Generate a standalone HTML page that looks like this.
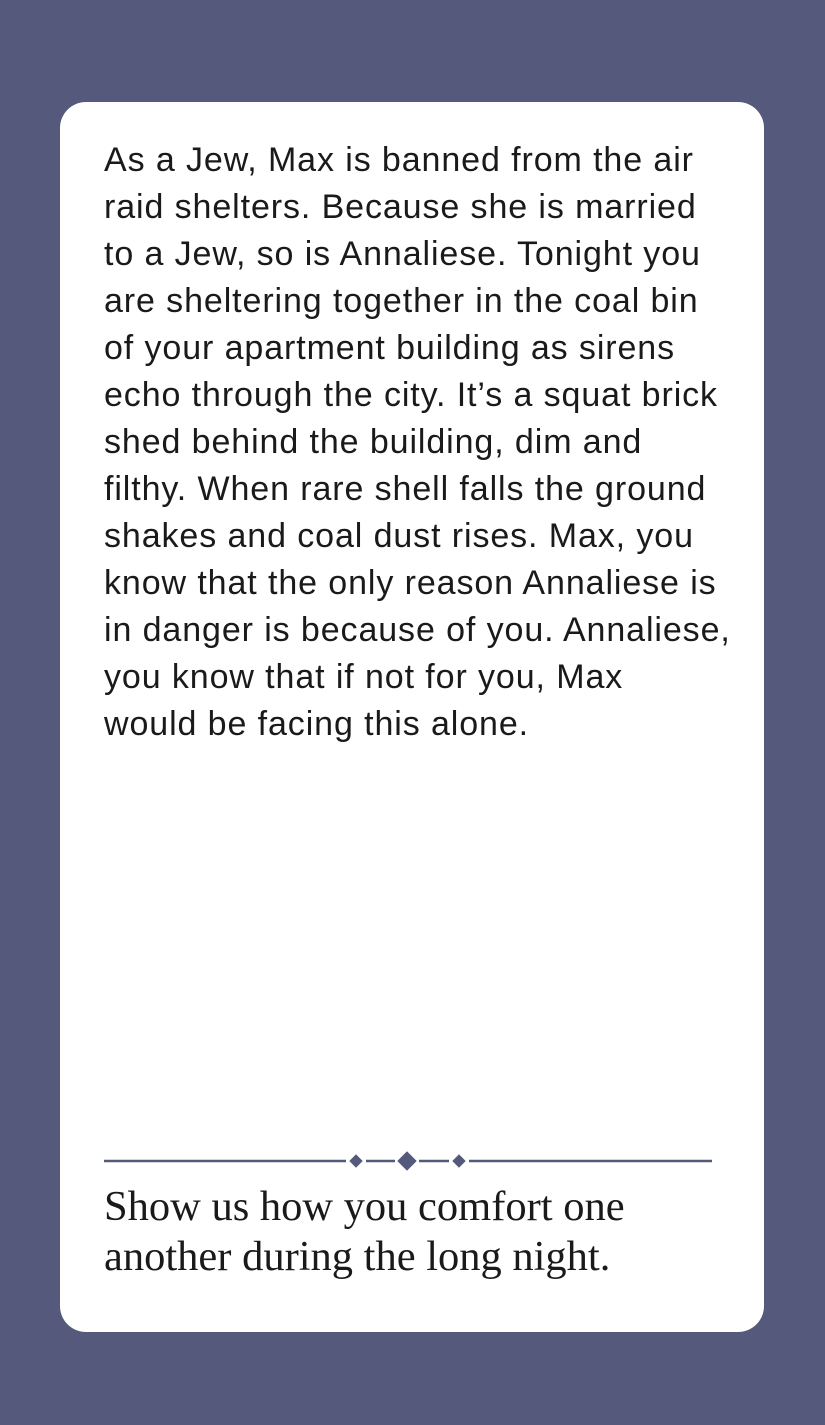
<!DOCTYPE html>
<html><head><style>
body{margin:0;width:825px;height:1425px;background:#555a7d;position:relative;overflow:hidden}
.card{position:absolute;left:60px;top:102px;width:704px;height:1230px;background:#fff;border-radius:26px}
.t{position:absolute;left:104px;top:137px;font-family:"Liberation Sans",sans-serif;font-size:34px;letter-spacing:0.9px;line-height:47px;color:#1a1a1a;white-space:nowrap}
.s{position:absolute;left:104px;top:1182px;font-family:"Liberation Serif",serif;font-size:42.5px;line-height:50px;color:#1a1a1a;white-space:nowrap}
</style></head><body>
<div class="card"></div>
<div class="t">As a Jew, Max is banned from the air<br>raid shelters. Because she is married<br>to a Jew, so is Annaliese. Tonight you<br>are sheltering together in the coal bin<br>of your apartment building as sirens<br>echo through the city. It’s a squat brick<br>shed behind the building, dim and<br>filthy. When rare shell falls the ground<br>shakes and coal dust rises. Max, you<br>know that the only reason Annaliese is<br>in danger is because of you. Annaliese,<br>you know that if not for you, Max<br>would be facing this alone.</div>
<svg style="position:absolute;left:0;top:0" width="825" height="1425">
<g fill="#555a7d" stroke="#555a7d" stroke-width="2.5">
<line x1="104" y1="1161" x2="346" y2="1161"/>
<line x1="366" y1="1161" x2="395" y2="1161"/>
<line x1="419" y1="1161" x2="449" y2="1161"/>
<line x1="469" y1="1161" x2="712" y2="1161"/>
<path d="M356 1155 L362 1161 L356 1167 L350 1161Z" stroke-width="1"/>
<path d="M407 1152 L416 1161 L407 1170 L398 1161Z" stroke-width="1"/>
<path d="M459 1155 L465 1161 L459 1167 L453 1161Z" stroke-width="1"/>
</g></svg>
<div class="s">Show us how you comfort one<br>another during the long night.</div>
</body></html>
